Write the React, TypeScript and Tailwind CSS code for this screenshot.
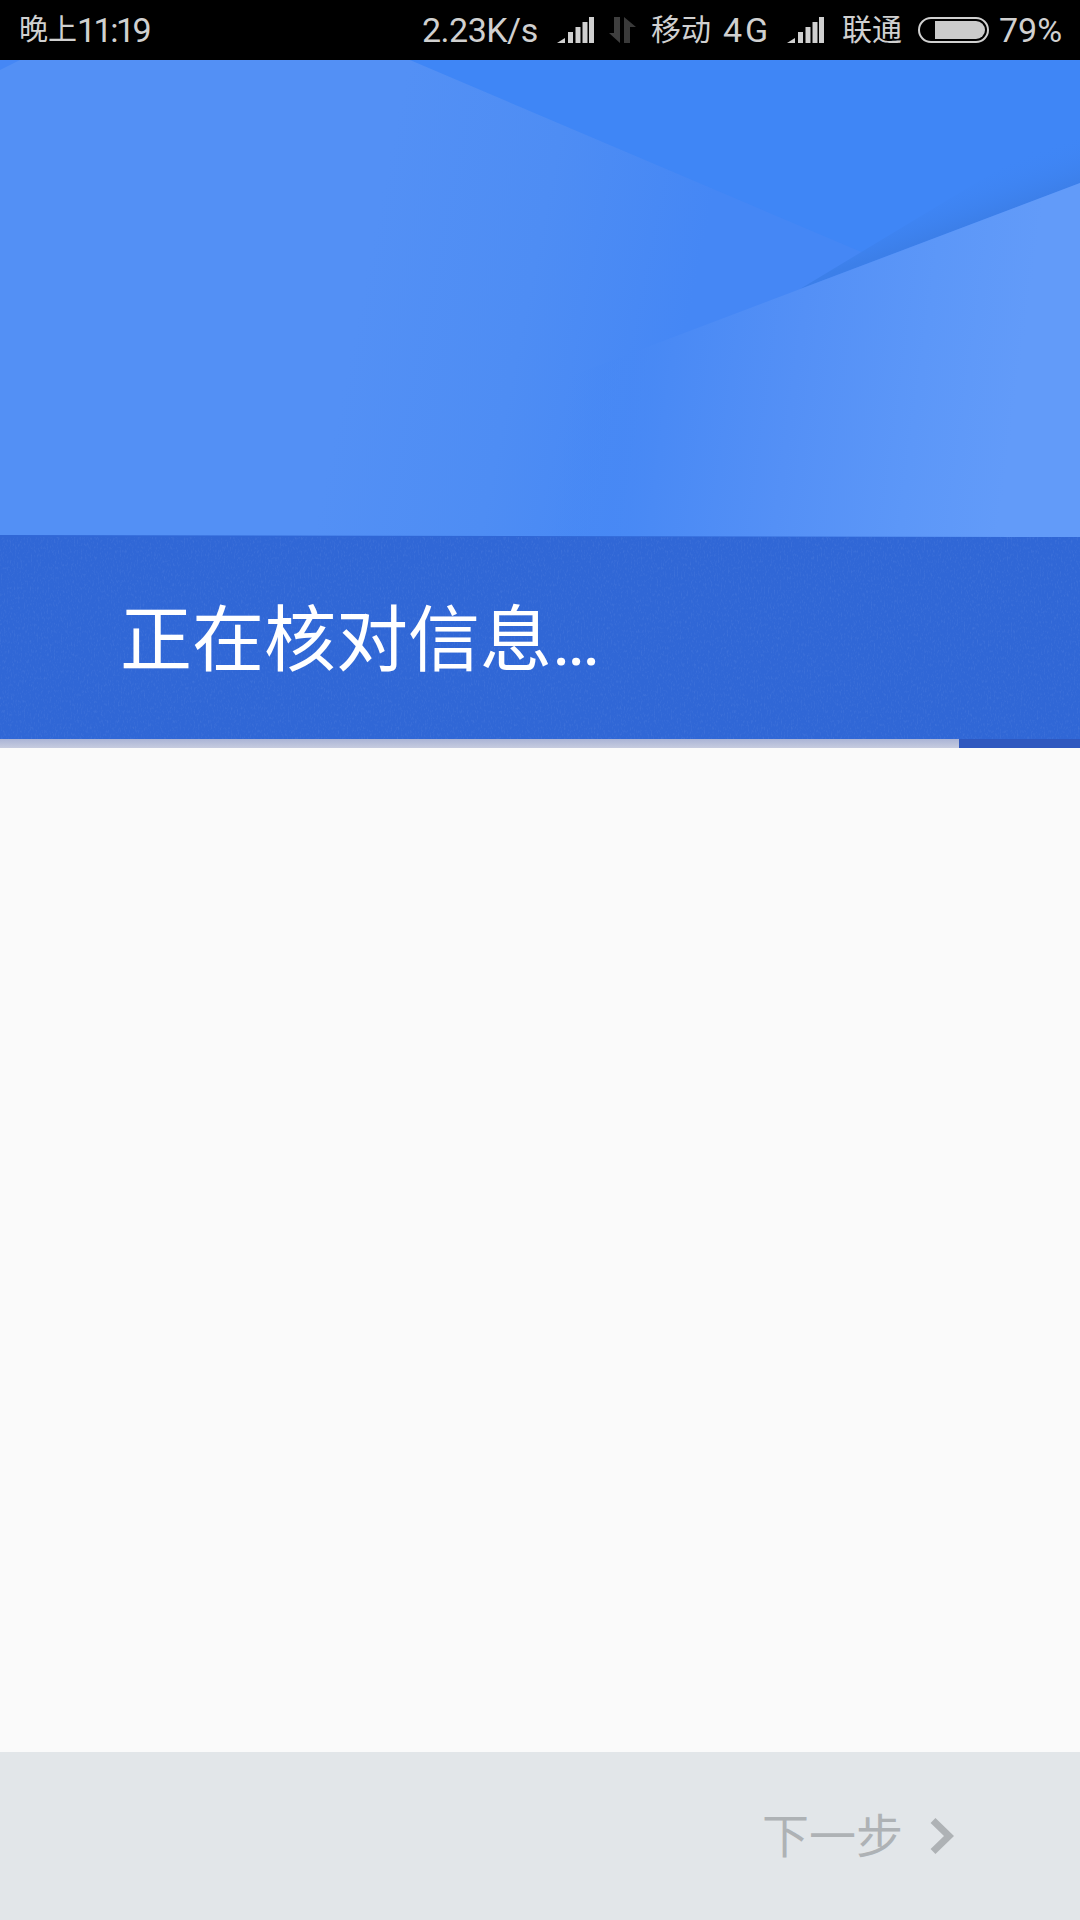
const cjk = "font-['Roboto','Noto_Sans_CJK_SC',sans-serif]";

function Signal() {
  return (
    <svg width="37" height="26" viewBox="0 0 37 26" className="shrink-0">
      <path d="M0 26 L8 21 V26 Z" fill="#d0d0d0" />
      <rect x="11" y="15" width="5" height="11" fill="#d0d0d0" />
      <rect x="18.5" y="10" width="5" height="16" fill="#d0d0d0" />
      <rect x="25.5" y="5" width="5" height="21" fill="#d0d0d0" />
      <rect x="32" y="0" width="5" height="26" fill="#d0d0d0" />
    </svg>
  );
}

function DataArrows() {
  return (
    <svg width="27" height="26" viewBox="0 0 27 26" className="shrink-0">
      <path d="M0 16 H5 V0 H11 V26 Z" fill="#3f3f3f" />
      <path d="M15 0 L27 10 H21 V26 H15 Z" fill="#3a3a3a" />
    </svg>
  );
}

function Battery() {
  return (
    <div className="w-[71px] h-[26px] rounded-full border-2 border-[#d0d0d0] p-[2px] pl-[15px] shrink-0">
      <div className="h-full w-full rounded-r-full bg-[#cbcbcb]" />
    </div>
  );
}

function HeaderArt() {
  return (
    <svg className="absolute inset-0 w-full h-full" viewBox="0 0 1080 477" preserveAspectRatio="none">
      <defs>
        <linearGradient id="left" gradientUnits="userSpaceOnUse" x1="360" y1="240" x2="680" y2="304">
          <stop offset="0" stopColor="#5390f5" />
          <stop offset="0.5" stopColor="#4e8df4" />
          <stop offset="1" stopColor="#4587f5" />
        </linearGradient>
        <linearGradient id="right" gradientUnits="userSpaceOnUse" x1="560" y1="400" x2="1000" y2="460">
          <stop offset="0" stopColor="#4587f5" stopOpacity="0" />
          <stop offset="0.22" stopColor="#4a8af5" />
          <stop offset="0.5" stopColor="#5490f6" />
          <stop offset="0.78" stopColor="#5c97f8" />
          <stop offset="1" stopColor="#629bf9" />
        </linearGradient>
        <linearGradient id="fold" gradientUnits="userSpaceOnUse" x1="1000" y1="153" x2="984" y2="108">
          <stop offset="0" stopColor="#3c7fe9" />
          <stop offset="1" stopColor="#3f86f6" stopOpacity="0" />
        </linearGradient>
      </defs>
      <rect width="1080" height="477" fill="url(#left)" />
      <path d="M0 0 H20 L0 10 Z" fill="#4587f5" />
      <path d="M410 0 H1080 V123 L878 199 Z" fill="#3f86f6" />
      <path d="M1080 60 V123 L800 229 Z" fill="url(#fold)" />
      <path d="M1080 123 L613 300 L480 350 V477 H1080 Z" fill="url(#right)" />
      <path d="M0 475 L1080 477 H0 Z" fill="#3067d6" />
    </svg>
  );
}

function Grain() {
  return (
    <svg className="absolute inset-0 w-full h-full opacity-[0.1]">
      <filter id="grain">
        <feTurbulence type="fractalNoise" baseFrequency="0.7 0.3" numOctaves="2" seed="4" />
        <feColorMatrix values="0 0 0 0 0.7  0 0 0 0 0.8  0 0 0 0 1  0 0 0 2 -1" />
      </filter>
      <rect width="100%" height="100%" filter="url(#grain)" />
    </svg>
  );
}

export default function App() {
  return (
    <div className={`w-[1080px] h-[1920px] flex flex-col overflow-hidden bg-[#fafafa] ${cjk}`}>
      {/* status bar */}
      <div className="h-[60px] shrink-0 bg-black flex items-center whitespace-nowrap text-[#d0d0d0] text-[34px] leading-none pl-[19px]">
        <span className="w-[131px] shrink-0 flex items-center">
          <span className="text-[29px]">晚上</span>
          <span className="tracking-[-2.5px]">11:19</span>
        </span>
        <span className="ml-[272px] w-[116px] shrink-0 tracking-[-0.5px]">2.23K/s</span>
        <div className="ml-[19px]"><Signal /></div>
        <div className="ml-[15px]"><DataArrows /></div>
        <span className="ml-[15px] w-[61px] shrink-0 text-[30px]">移动</span>
        <span className="ml-[11px] w-[46px] shrink-0 tracking-[3px]">4G</span>
        <div className="ml-[18px]"><Signal /></div>
        <span className="ml-[18px] w-[60px] shrink-0 text-[30px]">联通</span>
        <div className="ml-[16px]"><Battery /></div>
        <span className="ml-[10px] shrink-0">79%</span>
      </div>

      {/* header image + title band */}
      <div className="relative h-[477px] shrink-0 overflow-hidden">
        <HeaderArt />
      </div>
      <div className="relative h-[202px] shrink-0 bg-[#3067d6] flex items-center pl-[120px] pt-[6px] overflow-hidden">
        <Grain />
        <span className="relative text-white text-[72px] leading-none font-normal">
          正在核对信息<span className="tracking-[-4px]">...</span>
        </span>
      </div>

      {/* progress */}
      <div className="h-[9px] shrink-0 bg-[#2f58bf] flex">
        <div className="w-[959px] h-full bg-gradient-to-b from-[#aab4d6] to-[#c6cbdf]" />
      </div>

      <div className="flex-1" />

      {/* footer */}
      <div className="h-[168px] shrink-0 bg-[#e2e6e9] flex items-center justify-end pr-[126px]">
        <span className="text-[47px] leading-none text-[#aeb2b5]">下一步</span>
        <svg width="24" height="36" viewBox="0 0 24 36" className="ml-[27px] shrink-0">
          <path d="M3 2.5 L19 18 L3 33.5" fill="none" stroke="#aeb2b5" strokeWidth="7" />
        </svg>
      </div>
    </div>
  );
}
